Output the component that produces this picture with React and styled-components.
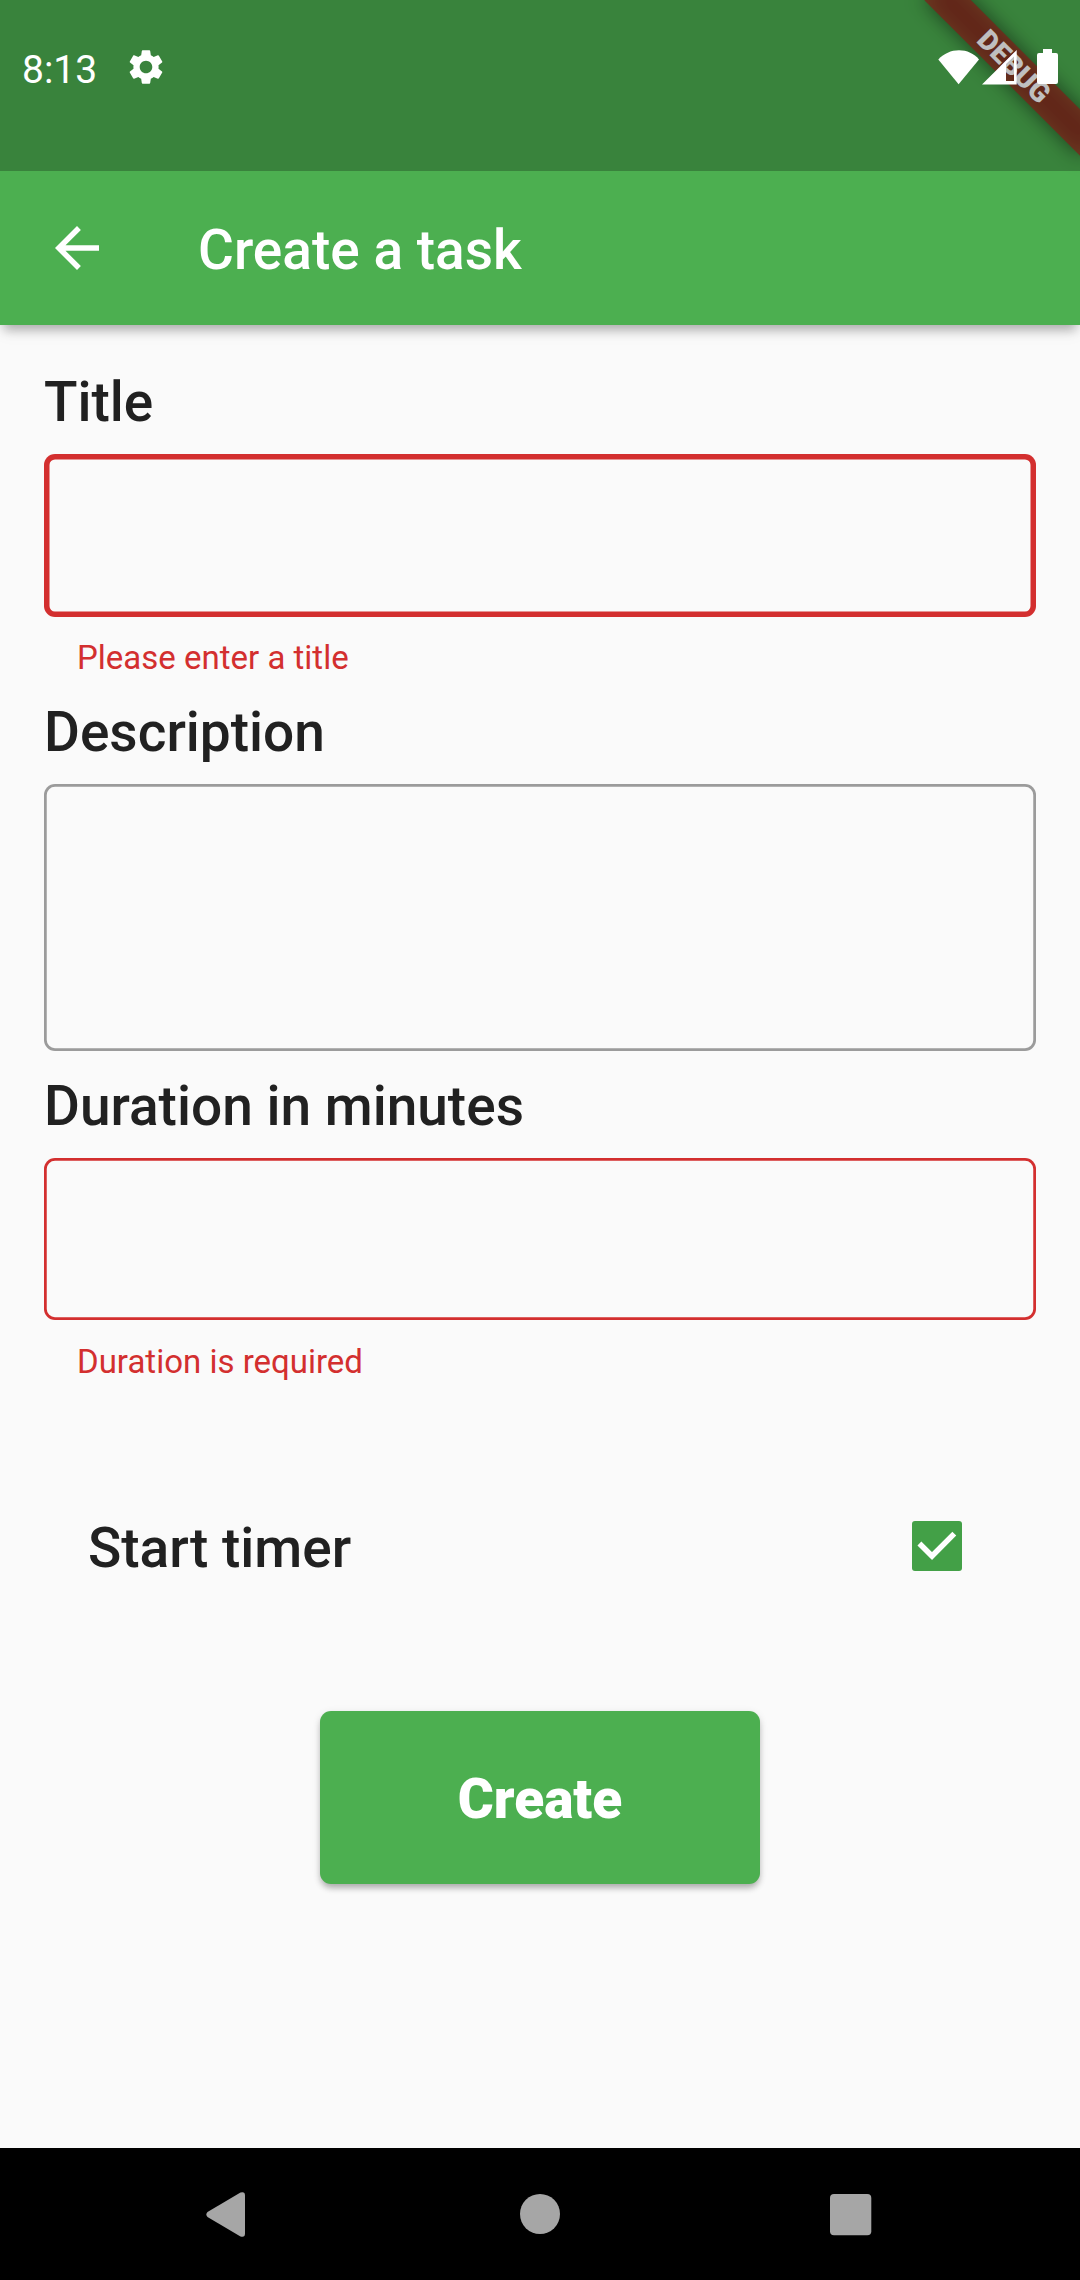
import React from 'react';
import styled, { createGlobalStyle } from 'styled-components';
import { MdArrowBack, MdSettings } from 'react-icons/md';

const GlobalStyle = createGlobalStyle`
  *, *::before, *::after { box-sizing: border-box; }
  body { margin: 0; background: #fafafa; font-family: Roboto, "Noto Sans", sans-serif; }
`;

const Screen = styled.div`
  position: relative;
  display: flex;
  flex-direction: column;
  width: 1080px;
  height: 2280px;
  overflow: hidden;
  background: #fafafa;
  color: #212121;
`;

const Header = styled.header`
  flex: none;
  background: #4caf50;
  box-shadow: 0 9px 10px -4px rgba(0, 0, 0, 0.27), 0 3px 20px rgba(0, 0, 0, 0.08);
`;

const StatusBar = styled.div`
  position: relative;
  z-index: 2;
  display: flex;
  align-items: flex-start;
  height: 171px;
  padding: 0 22px 0 22px;
  background: rgba(0, 0, 0, 0.25);
  color: #fff;
`;

const Clock = styled.span`
  padding-top: 48px;
  width: 103px;
  font-size: 39px;
  line-height: 45px;
`;

const StatusIcon = styled.span`
  display: flex;
  margin-top: ${(p) => p.$top}px;
  margin-left: ${(p) => p.$left || 0};
`;

const DebugBanner = styled.div`
  position: absolute;
  z-index: 1;
  top: 49.6px;
  right: -43.9px;
  width: 220px;
  height: 33px;
  transform: rotate(45deg);
  display: flex;
  align-items: center;
  justify-content: center;
  color: #fff;
  font-size: 28px;
  font-weight: 900;
  line-height: 33px;

  &::before,
  &::after {
    content: '';
    position: absolute;
    inset: 0;
    z-index: -1;
  }
  &::before { background: rgba(0, 0, 0, 0.5); filter: blur(10px); }
  &::after { background: rgba(183, 28, 28, 0.63); }
`;

const Toolbar = styled.div`
  display: flex;
  align-items: center;
  height: 154px;
  padding-left: 44px;
  color: #fff;
`;

const BackButton = styled.button`
  display: flex;
  width: 66px;
  height: 66px;
  padding: 0;
  border: 0;
  background: none;
  color: inherit;
`;

const PageTitle = styled.h1`
  margin: 3px 0 0 88px;
  font-size: 55px;
  font-weight: 500;
  line-height: 64px;
`;

const Form = styled.form`
  flex: 1;
  display: flex;
  flex-direction: column;
  padding: 45px 44px 0;
`;

const Field = styled.div`
  display: flex;
  flex-direction: column;
  margin-bottom: ${(p) => p.$after}px;
`;

const Label = styled.label`
  margin-bottom: 20px;
  font-size: 55px;
  font-weight: 500;
  line-height: 64px;
`;

const TextBox = styled.input`
  display: block;
  width: 100%;
  height: ${(p) => p.$height}px;
  padding: 33px;
  border: 0;
  border-radius: 11px;
  outline: none;
  resize: none;
  background: transparent;
  box-shadow: inset 0 0 0 ${(p) => p.$stroke}px ${(p) => p.$color};
  font: 44px Roboto, sans-serif;
`;

const ErrorText = styled.p`
  margin: ${(p) => p.$gap}px 0 0 33px;
  color: #d32f2f;
  font-size: 33px;
  line-height: 39px;
`;

const TimerRow = styled.div`
  display: flex;
  align-items: center;
  justify-content: space-between;
  height: 64px;
  padding: 0 74px 0 44px;
  font-size: 55px;
  font-weight: 500;
  line-height: 64px;
`;

const CheckBox = styled.span`
  display: flex;
  width: 50px;
  height: 50px;
  margin-top: -4px;
  border-radius: 3px;
  background: #43a047;
`;

const CreateButton = styled.button`
  align-self: center;
  width: 440px;
  height: 173px;
  margin-top: 131px;
  padding: 3px 0 0;
  border: 0;
  border-radius: 11px;
  background: #4caf50;
  color: #fff;
  font-family: inherit;
  font-size: 55px;
  font-weight: 900;
  line-height: 64px;
  box-shadow: 0 5px 6px -1px rgba(0, 0, 0, 0.26), 0 2px 9px rgba(0, 0, 0, 0.1);
`;

const NavBar = styled.nav`
  flex: none;
  display: flex;
  align-items: flex-start;
  justify-content: space-between;
  height: 132px;
  padding: 44px 208px 0 206px;
  background: #000;
  color: #a6a6a6;
`;

function WifiIcon() {
  return (
    <svg width="42" height="35" viewBox="0 0 42 35" fill="currentColor">
      <path d="M0.3 9.5C6 3.6 13 0.3 21 0.3S36 3.6 41 9.5L20.6 34.2Z" />
    </svg>
  );
}

function SignalIcon() {
  return (
    <svg width="36" height="35" viewBox="0 0 36 35" fill="currentColor" fillRule="evenodd">
      <path d="M0 34.5L34.7 0V34.5ZM24 14V31H32V6.5Z" />
    </svg>
  );
}

function BatteryIcon() {
  return (
    <svg width="21" height="35" viewBox="0 0 21 35" fill="currentColor">
      <path d="M6 0H15V4H19Q21 4 21 6V33Q21 35 19 35H2Q0 35 0 33V6Q0 4 2 4H6Z" />
    </svg>
  );
}

function App() {
  return (
    <Screen>
      <GlobalStyle />
      <Header>
        <StatusBar>
          <Clock>8:13</Clock>
          <StatusIcon $top={46}><MdSettings size={42} /></StatusIcon>
          <StatusIcon $top={50} $left="auto"><WifiIcon /></StatusIcon>
          <StatusIcon $top={50} $left="2px"><SignalIcon /></StatusIcon>
          <StatusIcon $top={49} $left="19px"><BatteryIcon /></StatusIcon>
        </StatusBar>
        <Toolbar>
          <BackButton type="button" aria-label="Back"><MdArrowBack size={66} /></BackButton>
          <PageTitle>Create a task</PageTitle>
        </Toolbar>
      </Header>
      <DebugBanner>DEBUG</DebugBanner>

      <Form>
        <Field $after={22.5}>
          <Label htmlFor="title">Title</Label>
          <TextBox id="title" $height={162.5} $stroke={5.5} $color="#d32f2f" />
          <ErrorText $gap={21.5}>Please enter a title</ErrorText>
        </Field>
        <Field $after={23}>
          <Label htmlFor="description">Description</Label>
          <TextBox as="textarea" id="description" $height={267} $stroke={2.75} $color="#9b9b9b" />
        </Field>
        <Field $after={135}>
          <Label htmlFor="duration">Duration in minutes</Label>
          <TextBox id="duration" $height={162.5} $stroke={2.75} $color="#d32f2f" />
          <ErrorText $gap={22}>Duration is required</ErrorText>
        </Field>
        <TimerRow>
          Start timer
          <CheckBox role="checkbox" aria-checked="true">
            <svg width="50" height="50" viewBox="0 0 50 50" fill="none" stroke="#fff" strokeWidth="5.5">
              <path d="M7.4 22.5L20 35L42.3 12.6" />
            </svg>
          </CheckBox>
        </TimerRow>
        <CreateButton type="button">Create</CreateButton>
      </Form>

      <NavBar>
        <svg width="40" height="46" viewBox="0 0 40 46" fill="currentColor">
          <path d="M1.5 20L34.5 0.6Q39 -0.8 39 3.5V41.5Q39 45.8 34.5 44.4L1.5 25Q-0.8 22.5 1.5 20Z" />
        </svg>
        <svg width="44" height="42" viewBox="0 0 44 42" fill="currentColor">
          <circle cx="24" cy="22" r="20" />
        </svg>
        <svg width="42" height="44" viewBox="0 0 42 44" fill="currentColor">
          <rect x="0" y="2" width="41.3" height="41.3" rx="4" />
        </svg>
      </NavBar>
    </Screen>
  );
}

export default App;
